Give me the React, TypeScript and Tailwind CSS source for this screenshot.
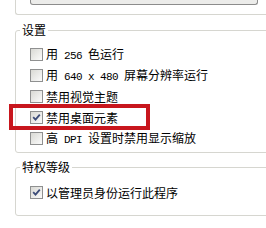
import React from 'react';

function Box({ checked }: { checked?: boolean }) {
  return (
    <span className="flex h-[13px] w-[13px] shrink-0 items-center justify-center border border-[#8f9090] bg-linear-to-br from-[#d9d9d4] to-[#fbfbfb]">
      {checked && (
        <svg width="9" height="9" viewBox="0 0 9 9">
          <path d="M1.2 4.2 L3.5 6.6 L7.8 1.6" stroke="#3c4c78" strokeWidth="1.8" fill="none" />
        </svg>
      )}
    </span>
  );
}

function Mono({ children }: { children: string }) {
  return (
    <span className="whitespace-pre font-['Liberation_Mono',monospace] text-[11px] tracking-[-0.6px]">{children}</span>
  );
}

function Row({ checked, children }: { checked?: boolean; children: React.ReactNode }) {
  return (
    <div className="flex h-[21px] items-center gap-[3px]">
      <Box checked={checked} />
      <span className="leading-[12px]">{children}</span>
    </div>
  );
}

export default function App() {
  return (
    <div className="relative h-[228px] w-[266px] overflow-hidden bg-white font-['Noto_Sans_CJK_SC',sans-serif] text-[12px] text-black">
      {/* previous group, cut at the top */}
      <div className="ml-[15px] h-[15px] w-[300px] rounded-bl-[3px] border-b border-l border-[#d6d6d0]">
        <div className="ml-[14px] h-[5px] w-[228px] rounded-b-[3px] border-x border-b border-[#8c8c8c] bg-[#ececea]" />
      </div>

      <fieldset className="ml-[15px] mt-[8px] w-[300px] rounded-[3px] border border-[#d6d6d0]">
        <legend className="ml-[4px] px-[2px] leading-[14px]">设置</legend>
        <div className="pb-[3px] pl-[14px] pt-[7px]">
          <Row>
            用<Mono> 256 </Mono>色运行
          </Row>
          <Row>
            用<Mono> 640 x 480 </Mono>屏幕分辨率运行
          </Row>
          <Row>禁用视觉主题</Row>
          <Row checked>禁用桌面元素</Row>
          <Row>
            高<Mono> DPI </Mono>设置时禁用显示缩放
          </Row>
        </div>
      </fieldset>

      <fieldset className="ml-[15px] mt-[7px] w-[300px] rounded-[3px] border border-[#d6d6d0]">
        <legend className="ml-[4px] px-[2px] leading-[14px]">特权等级</legend>
        <div className="pb-[12px] pl-[14px] pt-[8px]">
          <Row checked>以管理员身份运行此程序</Row>
        </div>
      </fieldset>

      {/* red highlight annotation */}
      <div className="absolute left-[9px] top-[104px] h-[26px] w-[141px] border-[4px] border-[#c8161d]" />
    </div>
  );
}
